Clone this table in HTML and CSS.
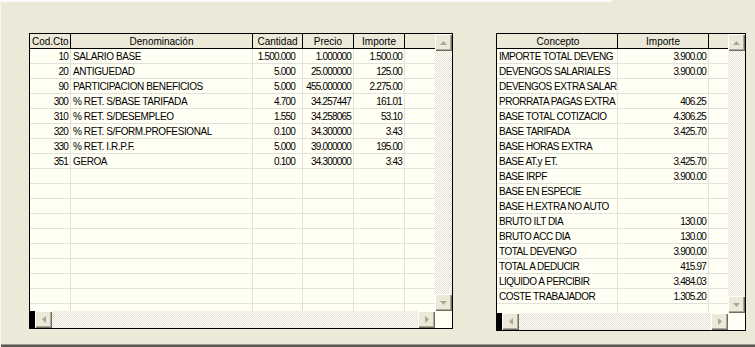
FILE: index.html
```html
<!DOCTYPE html>
<html lang="es">
<head>
<meta charset="utf-8">
<title>Nómina</title>
<link rel="stylesheet" href="styles.css">
</head>
<body>
<div class="screen">
  <div class="topline"></div>
  <div class="content">
    <div class="grid grid-left">
      <div class="view">
        <div class="row head">
          <div class="cell c1">Cod.Cto</div><div class="cell c2">Denominación</div><div class="cell c3">Cantidad</div><div class="cell c4">Precio</div><div class="cell c5">Importe</div><div class="cell c6"></div>
        </div>
        <div class="row"><div class="cell c1 num">10</div><div class="cell c2 txt">SALARIO BASE</div><div class="cell c3 num qty">1.500.000</div><div class="cell c4 num">1.000000</div><div class="cell c5 num">1.500.00</div><div class="cell c6"></div></div>
        <div class="row"><div class="cell c1 num">20</div><div class="cell c2 txt">ANTIGUEDAD</div><div class="cell c3 num qty">5.000</div><div class="cell c4 num">25.000000</div><div class="cell c5 num">125.00</div><div class="cell c6"></div></div>
        <div class="row"><div class="cell c1 num">90</div><div class="cell c2 txt">PARTICIPACION BENEFICIOS</div><div class="cell c3 num qty">5.000</div><div class="cell c4 num">455.000000</div><div class="cell c5 num">2.275.00</div><div class="cell c6"></div></div>
        <div class="row"><div class="cell c1 num">300</div><div class="cell c2 txt">% RET. S/BASE TARIFADA</div><div class="cell c3 num qty">4.700</div><div class="cell c4 num">34.257447</div><div class="cell c5 num">161.01</div><div class="cell c6"></div></div>
        <div class="row"><div class="cell c1 num">310</div><div class="cell c2 txt">% RET. S/DESEMPLEO</div><div class="cell c3 num qty">1.550</div><div class="cell c4 num">34.258065</div><div class="cell c5 num">53.10</div><div class="cell c6"></div></div>
        <div class="row"><div class="cell c1 num">320</div><div class="cell c2 txt">% RET. S/FORM.PROFESIONAL</div><div class="cell c3 num qty">0.100</div><div class="cell c4 num">34.300000</div><div class="cell c5 num">3.43</div><div class="cell c6"></div></div>
        <div class="row"><div class="cell c1 num">330</div><div class="cell c2 txt">% RET. I.R.P.F.</div><div class="cell c3 num qty">5.000</div><div class="cell c4 num">39.000000</div><div class="cell c5 num">195.00</div><div class="cell c6"></div></div>
        <div class="row"><div class="cell c1 num">351</div><div class="cell c2 txt">GEROA</div><div class="cell c3 num qty">0.100</div><div class="cell c4 num">34.300000</div><div class="cell c5 num">3.43</div><div class="cell c6"></div></div>
        <div class="row"><div class="cell c1"></div><div class="cell c2"></div><div class="cell c3"></div><div class="cell c4"></div><div class="cell c5"></div><div class="cell c6"></div></div>
        <div class="row"><div class="cell c1"></div><div class="cell c2"></div><div class="cell c3"></div><div class="cell c4"></div><div class="cell c5"></div><div class="cell c6"></div></div>
        <div class="row"><div class="cell c1"></div><div class="cell c2"></div><div class="cell c3"></div><div class="cell c4"></div><div class="cell c5"></div><div class="cell c6"></div></div>
        <div class="row"><div class="cell c1"></div><div class="cell c2"></div><div class="cell c3"></div><div class="cell c4"></div><div class="cell c5"></div><div class="cell c6"></div></div>
        <div class="row"><div class="cell c1"></div><div class="cell c2"></div><div class="cell c3"></div><div class="cell c4"></div><div class="cell c5"></div><div class="cell c6"></div></div>
        <div class="row"><div class="cell c1"></div><div class="cell c2"></div><div class="cell c3"></div><div class="cell c4"></div><div class="cell c5"></div><div class="cell c6"></div></div>
        <div class="row"><div class="cell c1"></div><div class="cell c2"></div><div class="cell c3"></div><div class="cell c4"></div><div class="cell c5"></div><div class="cell c6"></div></div>
        <div class="row"><div class="cell c1"></div><div class="cell c2"></div><div class="cell c3"></div><div class="cell c4"></div><div class="cell c5"></div><div class="cell c6"></div></div>
        <div class="row"><div class="cell c1"></div><div class="cell c2"></div><div class="cell c3"></div><div class="cell c4"></div><div class="cell c5"></div><div class="cell c6"></div></div>
        <div class="row"><div class="cell c1"></div><div class="cell c2"></div><div class="cell c3"></div><div class="cell c4"></div><div class="cell c5"></div><div class="cell c6"></div></div>
        <div class="row"><div class="cell c1"></div><div class="cell c2"></div><div class="cell c3"></div><div class="cell c4"></div><div class="cell c5"></div><div class="cell c6"></div></div>
      </div>
      <div class="vscroll">
        <div class="btn"><svg width="7" height="4" viewBox="0 0 7 4"><polygon points="3.5,0 7,4 0,4"/></svg></div>
        <div class="track"></div>
        <div class="btn"><svg width="7" height="4" viewBox="0 0 7 4"><polygon points="0,0 7,0 3.5,4"/></svg></div>
      </div>
      <div class="hscroll">
        <div class="stub"></div>
        <div class="btn"><svg width="4" height="7" viewBox="0 0 4 7"><polygon points="4,0 4,7 0,3.5"/></svg></div>
        <div class="track"></div>
        <div class="btn"><svg width="4" height="7" viewBox="0 0 4 7"><polygon points="0,0 4,3.5 0,7"/></svg></div>
      </div>
      <div class="corner"></div>
    </div>

    <div class="grid grid-right">
      <div class="view">
        <div class="row head"><div class="cell r1">Concepto</div><div class="cell r2">Importe</div><div class="cell r3"></div></div>
        <div class="row"><div class="cell r1 txt">IMPORTE TOTAL DEVENG</div><div class="cell r2 num">3.900.00</div><div class="cell r3"></div></div>
        <div class="row"><div class="cell r1 txt">DEVENGOS SALARIALES</div><div class="cell r2 num">3.900.00</div><div class="cell r3"></div></div>
        <div class="row"><div class="cell r1 txt">DEVENGOS EXTRA SALAR</div><div class="cell r2 num"></div><div class="cell r3"></div></div>
        <div class="row"><div class="cell r1 txt">PRORRATA PAGAS EXTRA</div><div class="cell r2 num">406.25</div><div class="cell r3"></div></div>
        <div class="row"><div class="cell r1 txt">BASE TOTAL COTIZACIO</div><div class="cell r2 num">4.306.25</div><div class="cell r3"></div></div>
        <div class="row"><div class="cell r1 txt">BASE TARIFADA</div><div class="cell r2 num">3.425.70</div><div class="cell r3"></div></div>
        <div class="row"><div class="cell r1 txt">BASE HORAS EXTRA</div><div class="cell r2 num"></div><div class="cell r3"></div></div>
        <div class="row"><div class="cell r1 txt">BASE AT.y ET.</div><div class="cell r2 num">3.425.70</div><div class="cell r3"></div></div>
        <div class="row"><div class="cell r1 txt">BASE IRPF</div><div class="cell r2 num">3.900.00</div><div class="cell r3"></div></div>
        <div class="row"><div class="cell r1 txt">BASE EN ESPECIE</div><div class="cell r2 num"></div><div class="cell r3"></div></div>
        <div class="row"><div class="cell r1 txt">BASE H.EXTRA NO AUTO</div><div class="cell r2 num"></div><div class="cell r3"></div></div>
        <div class="row"><div class="cell r1 txt">BRUTO ILT DIA</div><div class="cell r2 num">130.00</div><div class="cell r3"></div></div>
        <div class="row"><div class="cell r1 txt">BRUTO ACC DIA</div><div class="cell r2 num">130.00</div><div class="cell r3"></div></div>
        <div class="row"><div class="cell r1 txt">TOTAL DEVENGO</div><div class="cell r2 num">3.900.00</div><div class="cell r3"></div></div>
        <div class="row"><div class="cell r1 txt">TOTAL A DEDUCIR</div><div class="cell r2 num">415.97</div><div class="cell r3"></div></div>
        <div class="row"><div class="cell r1 txt">LIQUIDO A PERCIBIR</div><div class="cell r2 num">3.484.03</div><div class="cell r3"></div></div>
        <div class="row"><div class="cell r1 txt">COSTE TRABAJADOR</div><div class="cell r2 num">1.305.20</div><div class="cell r3"></div></div>
        <div class="row"><div class="cell r1"></div><div class="cell r2"></div><div class="cell r3"></div></div>
      </div>
      <div class="vscroll">
        <div class="btn"><svg width="7" height="4" viewBox="0 0 7 4"><polygon points="3.5,0 7,4 0,4"/></svg></div>
        <div class="track"></div>
        <div class="btn"><svg width="7" height="4" viewBox="0 0 7 4"><polygon points="0,0 7,0 3.5,4"/></svg></div>
      </div>
      <div class="hscroll">
        <div class="stub"></div>
        <div class="btn"><svg width="4" height="7" viewBox="0 0 4 7"><polygon points="4,0 4,7 0,3.5"/></svg></div>
        <div class="track"></div>
        <div class="btn"><svg width="4" height="7" viewBox="0 0 4 7"><polygon points="0,0 4,3.5 0,7"/></svg></div>
      </div>
      <div class="corner"></div>
    </div>
  </div>
  <div class="footer"></div>
</div>
</body>
</html>
```

FILE: styles.css
```css
html, body {
  margin: 0;
  padding: 0;
  background: #ECE9D8;
}

.screen {
  width: 755px;
  height: 347px;
  display: flex;
  flex-direction: column;
  box-sizing: border-box;
  border-left: 1px solid #F8F7F2;
  overflow: hidden;
  font-family: "Liberation Sans", Arial, sans-serif;
  font-size: 10px;
  color: #000;
}

.topline {
  width: 611px;
  height: 2px;
  background: #FBFBF8;
  flex: none;
}

.content {
  display: flex;
  align-items: flex-start;
  padding: 31px 0 0 28px;
}

.footer {
  margin-top: auto;
  height: 2px;
  border-top: 1px solid #9C9A91;
  background: #5B5A54;
  flex: none;
}

.grid {
  display: grid;
  box-sizing: border-box;
  border: 1px solid #000;
  background: #FFFFF4;
  flex: none;
}

.grid-left {
  width: 424px;
  height: 296px;
  grid-template-columns: 405px 17px;
  grid-template-rows: 277px 17px;
}

.grid-right {
  width: 250px;
  height: 298px;
  margin-left: 43px;
  grid-template-columns: 231px 17px;
  grid-template-rows: 279px 17px;
}

.view {
  overflow: hidden;
}

.row {
  display: flex;
  height: 15px;
  box-sizing: border-box;
  border-bottom: 1px solid #E2E1DC;
}

.cell {
  box-sizing: border-box;
  height: 14px;
  padding: 2px 2px 0 2px;
  line-height: 12px;
  white-space: nowrap;
  overflow: hidden;
  border-right: 1px solid #E2E1DC;
  flex: none;
}

.head {
  border-bottom-color: #000;
  background: #ECE9D8;
}

.head .cell {
  text-align: center;
  border-right-color: #000;
}

.txt {
  letter-spacing: -0.4px;
}

.num {
  text-align: right;
  letter-spacing: -0.8px;
}

.qty {
  padding-right: 7px;
}

.c1 { width: 41px; }
.c2 { width: 182px; }
.c3 { width: 50px; }
.c4 { width: 51px; }
.c5 { width: 51px; }
.c6, .r3 { flex: 1; border-right: none; }
.head .c6, .head .r3 { border-right: none; }

.r1 { width: 121px; padding-left: 2px; padding-right: 0; }
.r1.txt { letter-spacing: -0.5px; }
.r2 { width: 91px; }

.vscroll {
  display: flex;
  flex-direction: column;
}

.hscroll {
  display: flex;
}

.track {
  flex: 1;
  background: repeating-conic-gradient(#FFFFFF 0 25%, #E3E0D0 0 50%) 0 0 / 2px 2px;
}

.stub {
  width: 5px;
  background: #000;
  flex: none;
}

.btn {
  width: 17px;
  height: 17px;
  flex: none;
  box-sizing: border-box;
  background: #ECE9D8;
  box-shadow: inset 1px 1px #FFFFFF, inset -1px -1px #716F64, inset -2px -2px #ACA899;
  display: flex;
  align-items: center;
  justify-content: center;
}

.btn svg {
  display: block;
  fill: #ACA899;
}

.corner {
  background: #FFFFF4;
}
```
